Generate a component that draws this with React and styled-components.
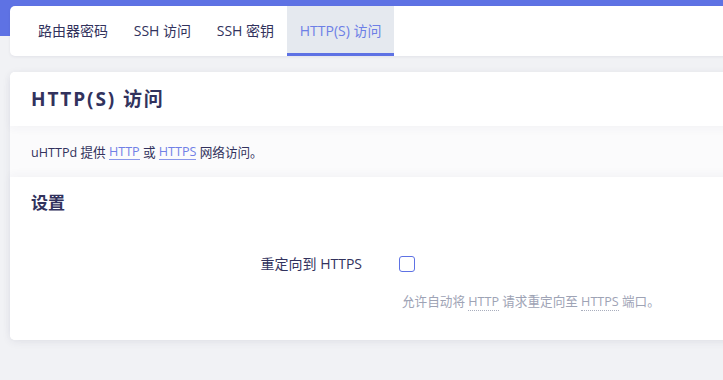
import React from "react";
import styled, { createGlobalStyle } from "styled-components";

const Global = createGlobalStyle`
  html, body { margin: 0; padding: 0; }
  body {
    background: #f1f2f5;
    overflow: hidden;
    font-family: "Open Sans", "Noto Sans CJK SC", sans-serif;
    color: #32325d;
  }
`;

const Page = styled.div`
  min-height: 380px;
  box-sizing: border-box;
  padding: 6px 0 0 10px;
  margin-right: -30px;
  background: linear-gradient(#5e72e4 0, #5e72e4 36px, #f1f2f5 36px);
  display: flex;
  flex-direction: column;
  gap: 16px;
`;

const TabBar = styled.div`
  display: flex;
  height: 50px;
  padding: 0 14px 0 15px;
  background: #fff;
  border-radius: 5px;
  box-shadow: 0 1px 3px rgba(50, 50, 93, 0.08);
`;

const Tab = styled.div`
  display: flex;
  align-items: center;
  box-sizing: border-box;
  padding: ${(p) => (p.$active ? "1px 13px 0" : "0 13px 2px")};
  margin-left: ${(p) => (p.$first ? "0" : "-0.3px")};
  font-size: 14px;
  color: ${(p) => (p.$active ? "#6d7fe6" : "#32325d")};
  background: ${(p) => (p.$active ? "#e5e9ef" : "transparent")};
  border-bottom: ${(p) => (p.$active ? "3px solid #5e72e4" : "none")};
`;

const Card = styled.div`
  background: #fff;
  border-radius: 5px;
  box-shadow: 0 2px 8px rgba(50, 50, 93, 0.08);
  display: flex;
  flex-direction: column;
`;

const CardHeader = styled.div`
  height: 54px;
  box-sizing: border-box;
  padding: 0 21px 2px;
  display: flex;
  align-items: center;
  background: #fff;
  border-radius: 5px 5px 0 0;
  box-shadow: 0 3px 8px rgba(50, 50, 93, 0.04);
  position: relative;
  z-index: 1;
`;

const Title = styled.h2`
  margin: 0;
  font-size: 19px;
  font-weight: 700;
  letter-spacing: 1.9px;
  color: #32325d;
`;

const Description = styled.div`
  height: 51px;
  display: flex;
  align-items: center;
  padding: 0 21px;
  font-size: 12.6px;
  color: #32325d;
  background: #fbfbfc;
`;

const Link = styled.span`
  color: #7080e6;
  border-bottom: 1px solid #8a97ea;
  line-height: 15px;
`;

const Section = styled.div`
  background: #fff;
  border-radius: 0 0 5px 5px;
  padding: 14px 21px 30px;
  box-shadow: 0 -3px 8px rgba(50, 50, 93, 0.04);
  position: relative;
`;

const SectionTitle = styled.h3`
  margin: 0 0 41px;
  font-size: 17px;
  font-weight: 700;
  color: #32325d;
  line-height: 24px;
`;

const Row = styled.div`
  display: grid;
  grid-template-columns: 331px 1fr;
  column-gap: 37px;
  row-gap: 22px;
  align-items: start;
`;

const Label = styled.div`
  text-align: right;
  font-size: 14px;
  color: #32325d;
  line-height: 16px;
`;

const Checkbox = styled.span`
  display: block;
  width: 14px;
  height: 14px;
  border: 1px solid #5e72e4;
  border-radius: 3px;
  background: #fff;
`;

const Help = styled.div`
  grid-column: 2;
  font-size: 12.6px;
  color: #9ea3b5;
  line-height: 16px;
  padding-left: 3px;
`;

const Abbr = styled.span`
  border-bottom: 1px dotted #a9aebd;
`;

export default function App() {
  return (
    <>
      <Global />
      <Page>
        <TabBar>
          <Tab $first>路由器密码</Tab>
          <Tab>SSH 访问</Tab>
          <Tab>SSH 密钥</Tab>
          <Tab $active>HTTP(S) 访问</Tab>
        </TabBar>
        <Card>
          <CardHeader>
            <Title>HTTP(S) 访问</Title>
          </CardHeader>
          <Description>
            uHTTPd 提供&nbsp;<Link>HTTP</Link>&nbsp;或&nbsp;<Link>HTTPS</Link>&nbsp;网络访问。
          </Description>
          <Section>
            <SectionTitle>设置</SectionTitle>
            <Row>
              <Label>重定向到 HTTPS</Label>
              <Checkbox />
              <Help>
                允许自动将 <Abbr>HTTP</Abbr> 请求重定向至 <Abbr>HTTPS</Abbr> 端口。
              </Help>
            </Row>
          </Section>
        </Card>
      </Page>
    </>
  );
}
